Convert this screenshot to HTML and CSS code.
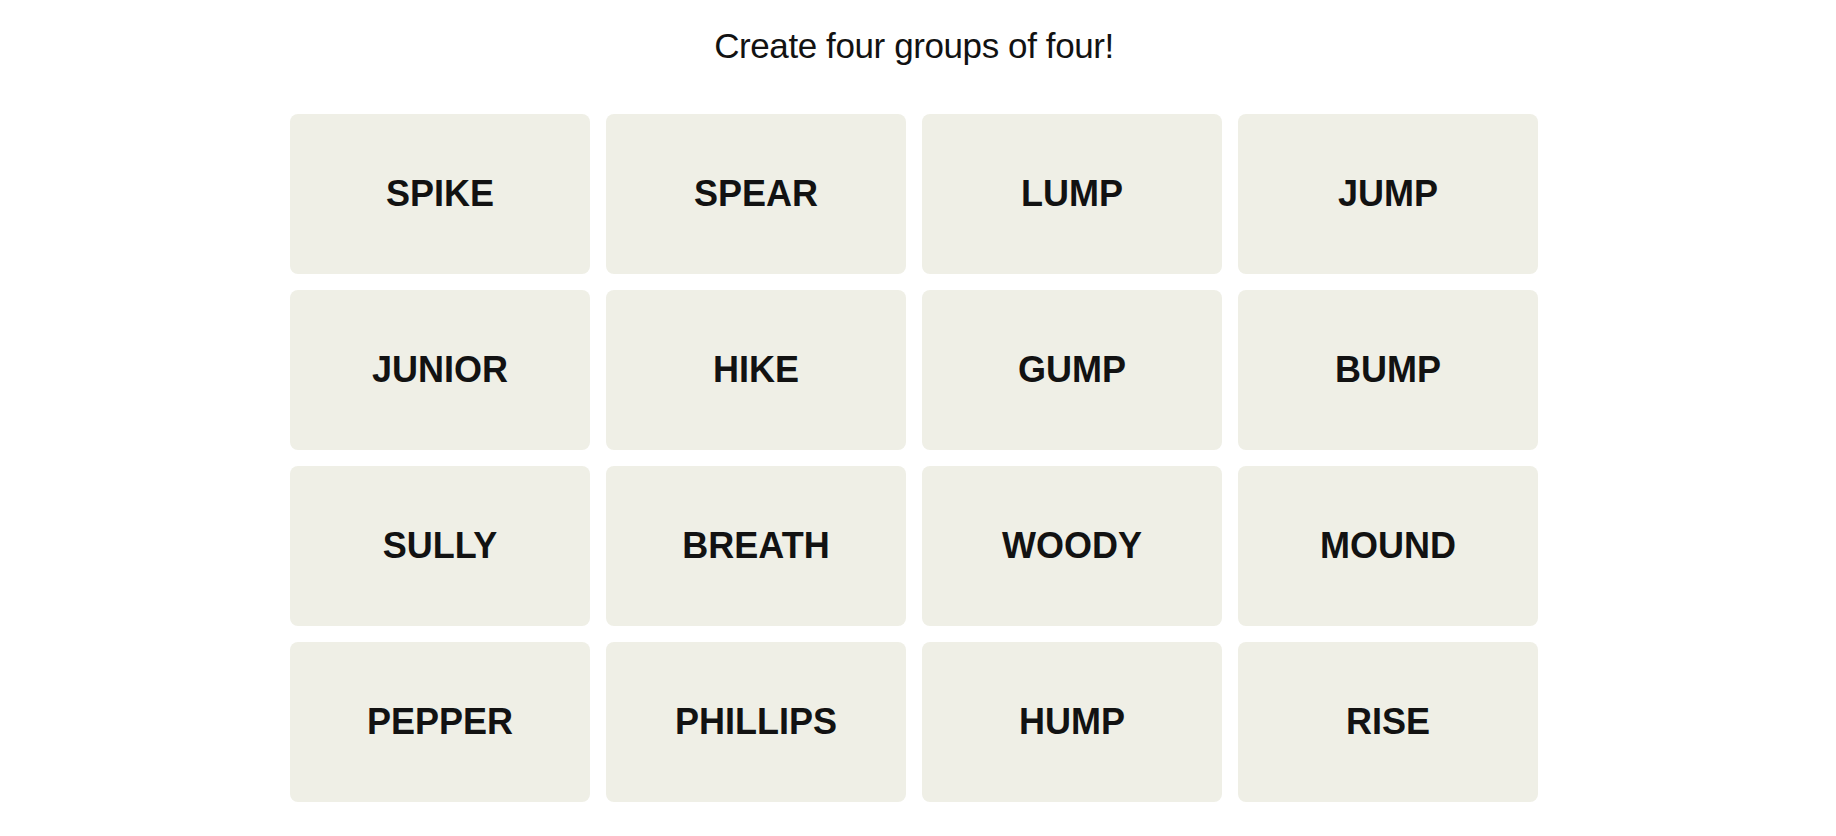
FILE: index.html
```html
<!DOCTYPE html>
<html lang="en">
<head>
<meta charset="utf-8">
<title>Connections</title>
<link rel="stylesheet" href="styles.css">
</head>
<body>
<main class="game">
  <p class="prompt">Create four groups of four!</p>
  <div class="board">
    <button class="tile">SPIKE</button>
    <button class="tile">SPEAR</button>
    <button class="tile">LUMP</button>
    <button class="tile">JUMP</button>
    <button class="tile">JUNIOR</button>
    <button class="tile">HIKE</button>
    <button class="tile">GUMP</button>
    <button class="tile">BUMP</button>
    <button class="tile">SULLY</button>
    <button class="tile">BREATH</button>
    <button class="tile">WOODY</button>
    <button class="tile">MOUND</button>
    <button class="tile">PEPPER</button>
    <button class="tile">PHILLIPS</button>
    <button class="tile">HUMP</button>
    <button class="tile">RISE</button>
  </div>
</main>
</body>
</html>
```
FILE: styles.css
```css
html, body {
  margin: 0;
  padding: 0;
  background: #ffffff;
}
body {
  padding-right: 8px;
  font-family: "Liberation Sans", Arial, sans-serif;
  color: #121212;
}
.game {
  width: 1248px;
  margin: 0 auto;
  padding-top: 26px;
}
.prompt {
  margin: 0;
  text-align: center;
  font-size: 35px;
  line-height: 40px;
  font-weight: 400;
  letter-spacing: -0.4px;
  color: #121212;
}
.board {
  margin-top: 48px;
  display: grid;
  grid-template-columns: repeat(4, 300px);
  grid-auto-rows: 160px;
  gap: 16px;
}
.tile {
  border: none;
  border-radius: 8px;
  background: #efefe6;
  color: #121212;
  font-family: "Liberation Sans", Arial, sans-serif;
  font-weight: 700;
  font-size: 36px;
  padding: 0;
  display: flex;
  align-items: center;
  justify-content: center;
  cursor: pointer;
}
```
